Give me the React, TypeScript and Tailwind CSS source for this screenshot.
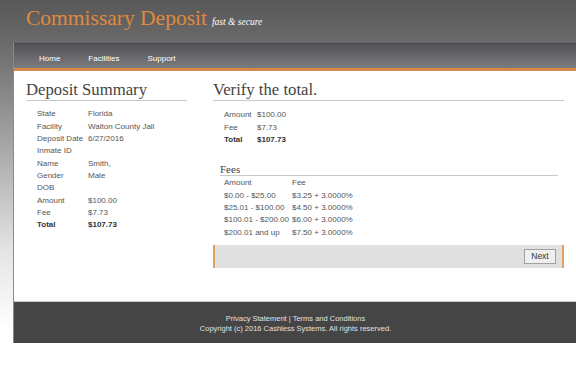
import React from "react";

const serif = { fontFamily: '"Liberation Serif", "DejaVu Serif", serif' };

function Row({ label, value, lw, bold }: { label: string; value: string; lw: string; bold?: boolean }) {
  return (
    <div className={`flex h-[12.35px] items-center ${bold ? "font-bold text-[#333]" : "text-[#555]"}`}>
      <div className={lw}>{label}</div>
      <div>{value}</div>
    </div>
  );
}

export default function App() {
  return (
    <div
      className="relative h-[384px] w-[576px] overflow-hidden bg-[linear-gradient(to_bottom,#585858_0px,#6b6b6b_45px,#a9a9a9_150px,#e4e4e4_250px,#ffffff_330px)]"
      style={{ fontFamily: '"Liberation Sans", Arial, sans-serif' }}
    >
      {/* header */}
      <div className="flex h-[43px] items-end pl-[26px] pb-[14px]">
        <span className="text-[21.5px] leading-none text-[#e08a3c]" style={serif}>
          Commissary Deposit
        </span>
        <span className="ml-[5px] mb-[2px] text-[9.5px] italic leading-none text-white" style={serif}>
          fast &amp; secure
        </span>
      </div>
      {/* container */}
      <div className="ml-[13px] w-[580px] border-l border-[#8a8a8a]">
        <nav className="flex h-[28px] items-center gap-[28px] border-t border-[#48484d] border-b-[3px] border-b-[#d8894a] bg-[linear-gradient(to_bottom,#525257,#7c7c80)] pl-[25px] pt-[5px] text-[8px] text-white">
          <span>Home</span>
          <span>Facilities</span>
          <span>Support</span>
        </nav>
        <div className="flex h-[230px] bg-white pt-[8px] text-[8px]">
          {/* left */}
          <div className="ml-[12px] w-[161px]">
            <h2 className="h-[22px] border-b border-[#c8c8c8] text-[16.7px] leading-[22px] text-[#444]" style={serif}>
              Deposit Summary
            </h2>
            <div className="mt-[7px] pl-[11px]">
              <Row lw="w-[51px]" label="State" value="Florida" />
              <Row lw="w-[51px]" label="Facility" value="Walton County Jail" />
              <Row lw="w-[51px]" label="Deposit Date" value="6/27/2016" />
              <Row lw="w-[51px]" label="Inmate ID" value="" />
              <Row lw="w-[51px]" label="Name" value="Smith," />
              <Row lw="w-[51px]" label="Gender" value="Male" />
              <Row lw="w-[51px]" label="DOB" value="" />
              <Row lw="w-[51px]" label="Amount" value="$100.00" />
              <Row lw="w-[51px]" label="Fee" value="$7.73" />
              <Row lw="w-[51px]" label="Total" value="$107.73" bold />
            </div>
          </div>
          {/* right */}
          <div className="ml-[26px] w-[351px]">
            <h2 className="h-[22px] border-b border-[#c8c8c8] text-[16.7px] leading-[22px] text-[#444]" style={serif}>
              Verify the total.
            </h2>
            <div className="mt-[8px] pl-[11px]">
              <Row lw="w-[33px]" label="Amount" value="$100.00" />
              <Row lw="w-[33px]" label="Fee" value="$7.73" />
              <Row lw="w-[33px]" label="Total" value="$107.73" bold />
            </div>
            <div className="ml-[7px] mr-[6px] mt-[17px]">
              <h3 className="h-[13px] border-b border-[#c8c8c8] text-[11px] leading-[12px] text-[#444]" style={serif}>
                Fees
              </h3>
              <div className="mt-[1px] pl-[4px]">
                <Row lw="w-[68px]" label="Amount" value="Fee" />
                <Row lw="w-[68px]" label="$0.00 - $25.00" value="$3.25 + 3.0000%" />
                <Row lw="w-[68px]" label="$25.01 - $100.00" value="$4.50 + 3.0000%" />
                <Row lw="w-[68px]" label="$100.01 - $200.00" value="$6.00 + 3.0000%" />
                <Row lw="w-[68px]" label="$200.01 and up" value="$7.50 + 3.0000%" />
              </div>
            </div>
            <div className="mt-[6px] flex h-[23px] items-center justify-end border-x-2 border-[#e0a060] bg-[#e0e0e0] pr-[6px]">
              <button className="h-[15px] w-[32px] border border-[#a0a0a0] bg-[#efefef] text-[8.5px] text-[#333]">
                Next
              </button>
            </div>
          </div>
        </div>
        <footer className="flex h-[42px] w-[563px] flex-col items-center justify-center border-t border-[#c8c8c8] bg-[#454545] pt-[3px] text-[7.5px] leading-[10px] text-[#e0e0e0]">
          <div>Privacy Statement | Terms and Conditions</div>
          <div>Copyright (c) 2016 Cashless Systems. All rights reserved.</div>
        </footer>
      </div>
    </div>
  );
}
